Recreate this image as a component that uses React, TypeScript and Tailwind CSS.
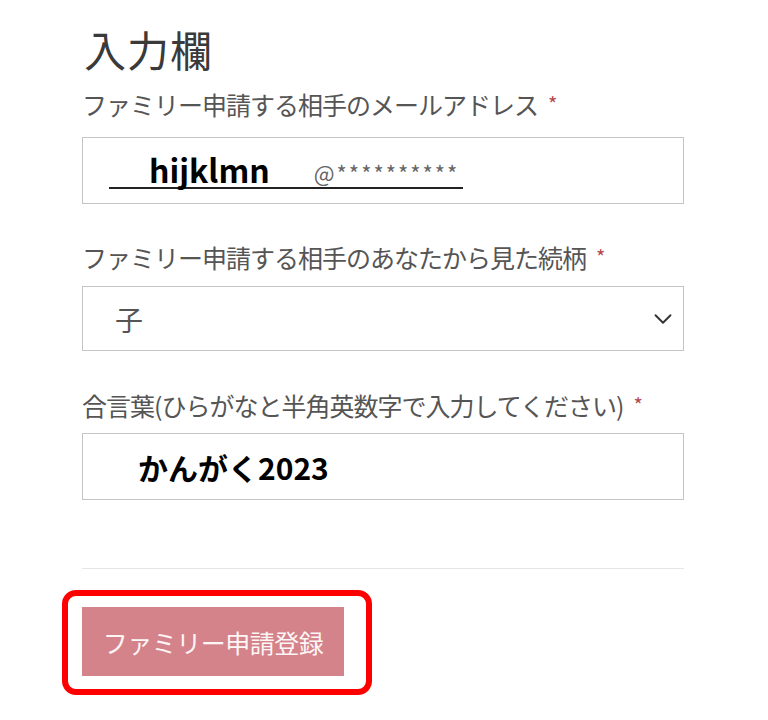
import { ChevronDown } from 'lucide-react';

const font = { fontFamily: '"Noto Sans CJK JP", "Noto Sans", sans-serif' };

function Label({ text, className }: { text: string; className: string }) {
  return (
    <div className={`flex items-center text-[25px] leading-[32px] tracking-[-1px] text-[#555555] ${className}`}>
      <span>{text}</span>
      <span className="ml-[10px] text-[20px] text-[#b5474f]">*</span>
    </div>
  );
}

export default function App() {
  return (
    <div className="min-h-screen w-[768px] bg-white" style={font}>
      <div className="w-[684px] pl-[82px] pt-[24px]">
        {/* Heading */}
        <h1 className="text-[42px] leading-[50px] font-normal text-[#3a3a3a] tracking-[1px] pl-[2px]">入力欄</h1>

        {/* Email */}
        <Label text="ファミリー申請する相手のメールアドレス" className="mt-[14px]" />
        <div className="mt-[17px] h-[67px] border border-[#c4c4c4] flex items-center pl-[26px]">
          <div className="flex items-end w-[354px] h-[40px] border-b-2 border-[#222222] pl-[40px] mb-[4px]">
            <span className="text-[32px] leading-[36px] font-bold text-black">hijklmn</span>
            <span className="ml-[44px] text-[22px] leading-[30px] tracking-[2px] text-[#666666]">@**********</span>
          </div>
        </div>

        {/* Relation */}
        <Label text="ファミリー申請する相手のあなたから見た続柄" className="mt-[37px]" />
        <div className="mt-[13px] h-[65px] border border-[#c4c4c4] flex items-center justify-between pl-[32px] pr-[5px]">
          <span className="text-[28px] leading-[32px] text-[#555555]">子</span>
          <ChevronDown size={30} strokeWidth={1.5} color="#333333" />
        </div>

        {/* Passphrase */}
        <Label text="合言葉(ひらがなと半角英数字で入力してください)" className="mt-[38px]" />
        <div className="mt-[12px] h-[67px] border border-[#c4c4c4] flex items-center pl-[55px]">
          <span className="text-[30px] leading-[34px] font-bold text-black">かんがく2023</span>
        </div>

        {/* Divider */}
        <div className="mt-[68px] h-px bg-[#e6e6e6]" />

        {/* Submit */}
        <div className="mt-[21px] -ml-[20px] w-[310px] border-[6px] border-[#ff0000] rounded-[14px] pl-[14px] pt-[11px] pb-[13px]">
          <button className="w-[262px] h-[69px] bg-[#d4838b] text-[#fdf6f6] text-[25px] leading-[32px] tracking-[-0.5px] flex items-center justify-center">
            ファミリー申請登録
          </button>
        </div>
      </div>
    </div>
  );
}
